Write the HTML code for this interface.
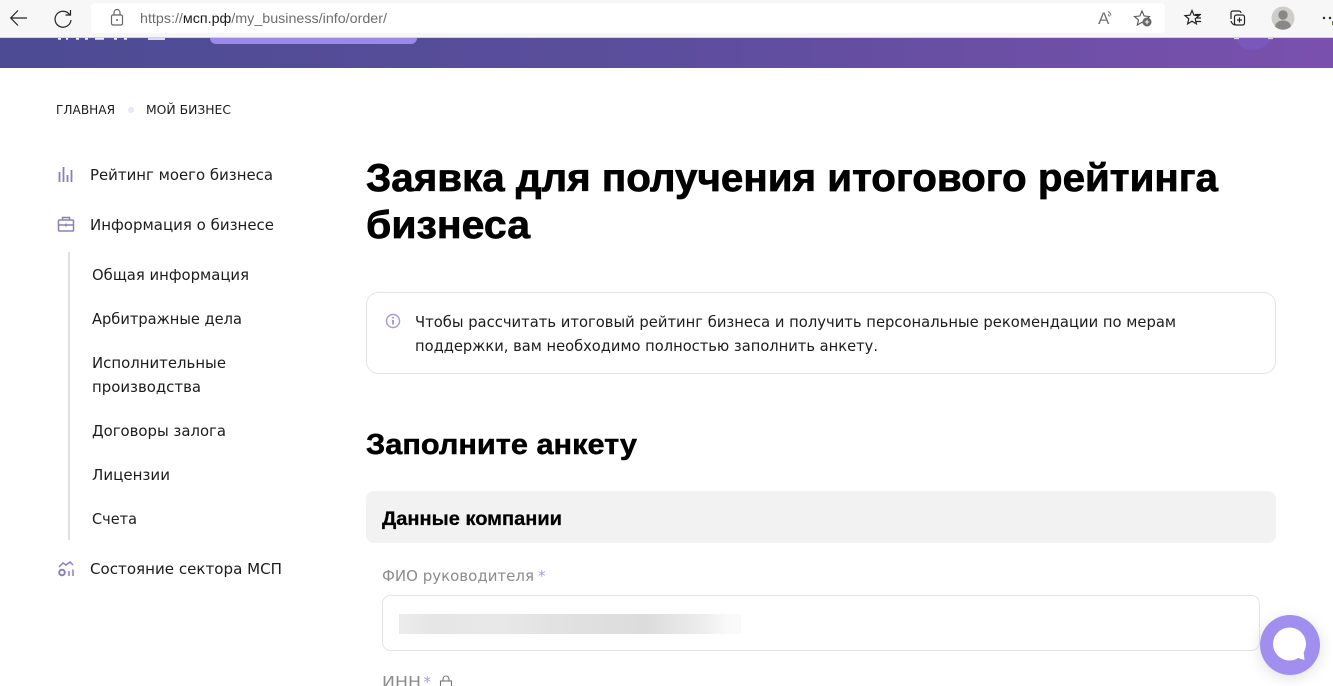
<!DOCTYPE html>
<html lang="ru"><head><meta charset="utf-8"><title>Заявка</title>
<style>
html,body{margin:0;padding:0;width:1333px;height:686px;overflow:hidden;background:#fff}
svg{display:block}
.h{font-family:"Liberation Sans","DejaVu Sans",sans-serif;font-weight:700;fill:#000;stroke:#000;stroke-width:.7px}
.t{font-family:"DejaVu Sans","Liberation Sans",sans-serif;font-size:15px;fill:#1c1c1c}
.b{font-family:"DejaVu Sans","Liberation Sans",sans-serif;font-size:12px;fill:#1c1c1c}
.u{font-family:"Liberation Sans",sans-serif;font-size:14px;fill:#6e6e6e}
.i{fill:none;stroke:#8a80b8;stroke-width:1.5}
.k{fill:none;stroke:#222;stroke-width:1.2}
</style></head><body>
<svg width="1333" height="686" viewBox="0 0 1333 686" xmlns="http://www.w3.org/2000/svg">
<defs>
<linearGradient id="g" x1="0" x2="1" y1="0" y2="0"><stop offset="0" stop-color="#4c4b93"/><stop offset=".5" stop-color="#5c4e9c"/><stop offset="1" stop-color="#7a50ae"/></linearGradient>
<linearGradient id="bl" x1="0" x2="1" y1="0" y2="0"><stop offset="0" stop-color="#ececec"/><stop offset=".1" stop-color="#e6e6e6"/><stop offset=".3" stop-color="#e8e8e8"/><stop offset=".45" stop-color="#e2e2e2"/><stop offset=".72" stop-color="#dcdcdc"/><stop offset=".88" stop-color="#ececec"/><stop offset=".97" stop-color="#fafafa"/><stop offset="1" stop-color="#fafafa"/></linearGradient>
<filter id="s" x="-30%" y="-30%" width="160%" height="160%"><feDropShadow dx="0" dy="3" stdDeviation="7" flood-color="#000" flood-opacity=".12"/></filter>
</defs>

<!-- purple header -->
<rect x="0" y="37" width="1333" height="31" fill="url(#g)"/>
<rect x="210" y="30" width="207" height="14" rx="6" fill="#9d8ae8"/>
<circle cx="1253" cy="30" r="20" fill="#7a58bb"/>
<path d="M1234 38.500h5M1268 38.500h5" stroke="#d8d0ee" stroke-width="1.200"/>
<path d="M58 38.800h3M66 38.800h2M76 38.800h3M85 38.800h3M95 38.800h9M114 38.800h3M124 38.800h3M148 39h17" stroke="#fff" stroke-width="1.800" fill="none" opacity=".9"/>

<!-- browser chrome -->
<rect x="0" y="0" width="1333" height="37" fill="#f7f7f7"/>
<rect x="0" y="37" width="1333" height="1" fill="#d4d4d8"/>
<rect x="91" y="3" width="1074" height="30" rx="4" fill="#fff"/>
<path class="k" d="M27 18H11M18 10.500L10.700 18 18 25.500"/>
<path class="k" d="M69.500 14.500A8 8 0 1 0 71 20M70.500 10v5h-5"/>
<g fill="none" stroke="#666" stroke-width="1.200"><rect x="111.500" y="15" width="11" height="10" rx="1.500"/><path d="M114 15v-2.500a3 3 0 0 1 6 0V15"/></g>
<circle cx="117" cy="20" r="1" fill="#666"/>
<text class="u" x="140" y="23" textLength="247" lengthAdjust="spacingAndGlyphs">https://<tspan fill="#1a1a1a">мсп.рф</tspan>/my_business/info/order/</text>
<text x="1098" y="24" font-family="Liberation Sans,sans-serif" font-size="17" fill="#777">A</text>
<path d="M1108 11.500a6 6 0 0 1 3 4M1108 14.500a3 3 0 0 1 1.500 2" fill="none" stroke="#777"/>
<path d="M1142 11l2.200 5 5.300.5-4 3.500 1.200 5-4.700-2.700-4.700 2.700 1.200-5-4-3.500 5.300-.5z" fill="none" stroke="#555" stroke-width="1.100"/>
<circle cx="1147" cy="22" r="4.500" fill="#666"/><path d="M1147 19.800v4.400M1144.800 22h4.400" stroke="#fff" stroke-width="1"/>
<path d="M1192 10.500l2 4.700 5 .4-3.800 3.300 1.200 5-4.400-2.700-4.400 2.700 1.200-5-3.800-3.300 5-.4z" fill="#f7f7f7" stroke="#222" stroke-width="1.200"/>
<path d="M1195 14.500h6M1197 18h4M1196 21.500h5" stroke="#222" stroke-width="1.200"/>
<g fill="none" stroke="#222" stroke-width="1.200"><path d="M1231 19v-6a2 2 0 0 1 2-2h6a2 2 0 0 1 2 2"/><path d="M1235 25c-2-.5-3.500-2-4-4"/><rect x="1234.500" y="15" width="10" height="10" rx="2"/><path d="M1239.500 17.500v5M1237 20h5"/></g>
<circle cx="1283" cy="18" r="11.500" fill="#cfcdca"/>
<circle cx="1283" cy="15" r="4.700" fill="#8a8886"/><path d="M1275 26.500c.5-4 4-6 8-6s7.500 2 8 6a11.500 11.500 0 0 1-16 0z" fill="#8a8886"/>
<circle cx="1324" cy="18" r="1.200" fill="#222"/><circle cx="1330" cy="18" r="1.200" fill="#222"/>
<rect x="1332" y="21" width="1" height="4" fill="#3a8a3a"/>

<!-- breadcrumbs -->
<text class="b" x="56" y="114" textLength="59" lengthAdjust="spacingAndGlyphs">ГЛАВНАЯ</text>
<circle cx="131" cy="110" r="3" fill="#e9e7f8"/>
<text class="b" x="146" y="114" textLength="85" lengthAdjust="spacingAndGlyphs">МОЙ БИЗНЕС</text>

<!-- sidebar -->
<path d="M59.500 172v10M63.500 167v15M67.500 175v7M71.500 170v12" stroke="#8a80b8" stroke-width="1.800" fill="none"/>
<g class="i"><rect x="58.500" y="220" width="15" height="11" rx="1"/><path d="M62.500 220v-2.500h7V220M58.500 225h15M66 223.500v3"/></g>
<path class="i" d="M59 567l4-4 3 2 4-3 3 3"/>
<circle cx="62" cy="572.500" r="2.800" fill="none" stroke="#8a80b8" stroke-width="2"/>
<path d="M69 571v5M73 569.500v6.500" stroke="#8a80b8" stroke-width="1.500"/>
<rect x="68" y="252" width="2" height="288" fill="#e0e0e0"/>
<text class="t" x="90" y="180" textLength="183" lengthAdjust="spacingAndGlyphs">Рейтинг моего бизнеса</text>
<text class="t" x="90" y="230" textLength="184" lengthAdjust="spacingAndGlyphs">Информация о бизнесе</text>
<text class="t" x="92" y="280" textLength="157" lengthAdjust="spacingAndGlyphs">Общая информация</text>
<text class="t" x="92" y="324" textLength="150" lengthAdjust="spacingAndGlyphs">Арбитражные дела</text>
<text class="t" x="92" y="368" textLength="134" lengthAdjust="spacingAndGlyphs">Исполнительные</text>
<text class="t" x="92" y="392" textLength="109" lengthAdjust="spacingAndGlyphs">производства</text>
<text class="t" x="92" y="436" textLength="134" lengthAdjust="spacingAndGlyphs">Договоры залога</text>
<text class="t" x="92" y="480" textLength="78" lengthAdjust="spacingAndGlyphs">Лицензии</text>
<text class="t" x="92" y="524" textLength="45" lengthAdjust="spacingAndGlyphs">Счета</text>
<text class="t" x="90" y="574" textLength="192" lengthAdjust="spacingAndGlyphs">Состояние сектора МСП</text>

<!-- main -->
<text class="h" x="366" y="191" font-size="39" textLength="852" lengthAdjust="spacingAndGlyphs">Заявка для получения итогового рейтинга</text>
<text class="h" x="366" y="238" font-size="39" textLength="164" lengthAdjust="spacingAndGlyphs">бизнеса</text>

<rect x="366.500" y="292.500" width="909" height="81" rx="12" fill="#fff" stroke="#e4e4e4"/>
<circle cx="393" cy="321" r="6.500" fill="none" stroke="#a99be0" stroke-width="1.500"/>
<path d="M393 320v4.500M393 317v1.500" stroke="#8a80b8" stroke-width="1.500"/>
<text class="t" x="415" y="327" textLength="761" lengthAdjust="spacingAndGlyphs">Чтобы рассчитать итоговый рейтинг бизнеса и получить персональные рекомендации по мерам</text>
<text class="t" x="415" y="351" textLength="463" lengthAdjust="spacingAndGlyphs">поддержки, вам необходимо полностью заполнить анкету.</text>

<text class="h" x="366" y="454" font-size="29" textLength="271" lengthAdjust="spacingAndGlyphs" style="stroke-width:.5px">Заполните анкету</text>

<rect x="366" y="491" width="910" height="52" rx="8" fill="#f2f2f2"/>
<text class="h" x="382" y="525" font-size="19.500" textLength="180" lengthAdjust="spacingAndGlyphs" style="stroke-width:.25px">Данные компании</text>

<text class="t" x="382" y="581" style="fill:#8c8c8c" textLength="152" lengthAdjust="spacingAndGlyphs">ФИО руководителя</text>
<text class="t" x="538" y="581" style="fill:#a99be0">*</text>
<rect x="382.500" y="595.500" width="877" height="55" rx="8" fill="#fff" stroke="#e4e4e4"/>
<rect x="399" y="614" width="342" height="20" fill="url(#bl)"/>

<text class="t" x="382" y="687" style="fill:#8c8c8c" textLength="39" lengthAdjust="spacingAndGlyphs">ИНН</text>
<text class="t" x="423.500" y="687" style="fill:#a99be0">*</text>
<g fill="none" stroke="#777" stroke-width="1.100"><rect x="440.500" y="681" width="11" height="8"/><path d="M443 681v-2a3 3 0 0 1 6 0v2"/></g>

<!-- chat -->
<circle cx="1290" cy="645" r="30" fill="#a18ff0" filter="url(#s)"/>
<circle cx="1289.500" cy="644" r="16.500" fill="#fff"/>
<path d="M1298 658L1304.500 660 1303.500 651z" fill="#fff"/>
</svg>
</body></html>
